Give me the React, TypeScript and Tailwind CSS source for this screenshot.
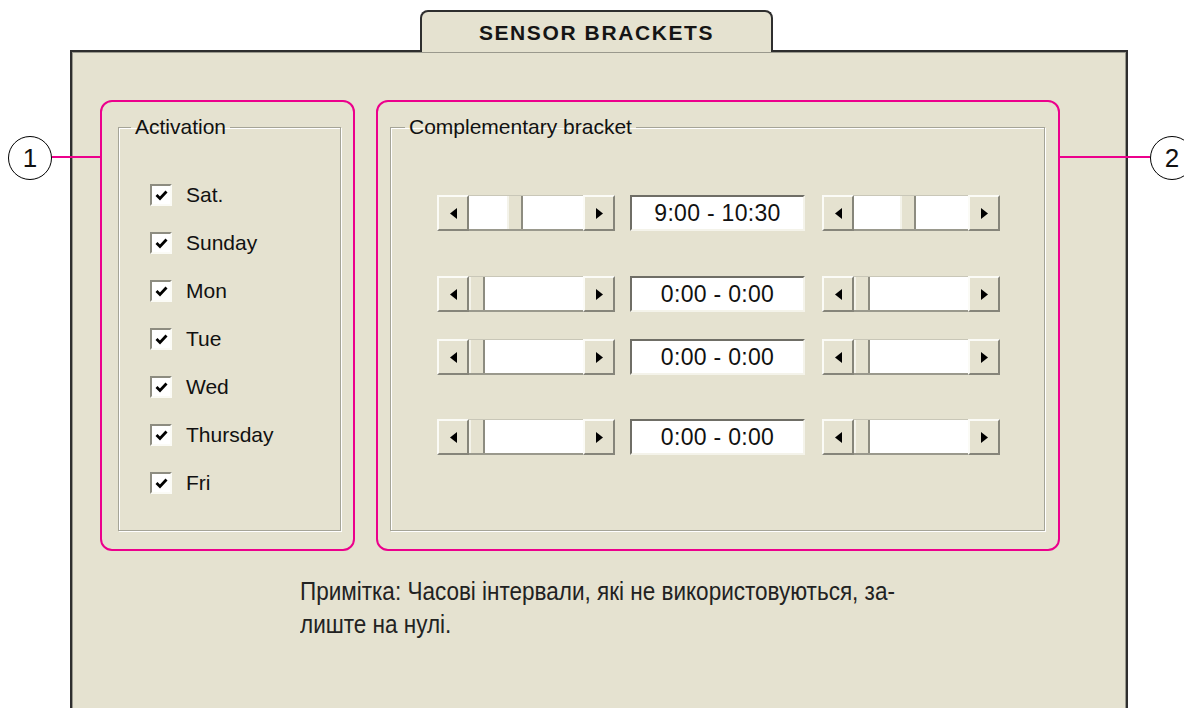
import React from 'react'

const days = ['Sat.', 'Sunday', 'Mon', 'Tue', 'Wed', 'Thursday', 'Fri']

const brackets = [
  { label: '9:00 - 10:30', from: 38, to: 46, gap: 'mt-0' },
  { label: '0:00 - 0:00', from: 0, to: 0, gap: 'mt-[45px]' },
  { label: '0:00 - 0:00', from: 0, to: 0, gap: 'mt-[27px]' },
  { label: '0:00 - 0:00', from: 0, to: 0, gap: 'mt-[44px]' },
]

function CheckBox() {
  return (
    <span className="flex h-[22px] w-[22px] items-center justify-center border-2 border-t-[#8d8c80] border-l-[#8d8c80] border-r-[#fbfbf6] border-b-[#fbfbf6] bg-white">
      <svg width="13" height="12" viewBox="0 0 13 12">
        <path d="M1.5 6 L5 9.5 L11.5 2.5" fill="none" stroke="#000" strokeWidth="2.8" />
      </svg>
    </span>
  )
}

function ArrowButton({ dir }: { dir: 'left' | 'right' }) {
  return (
    <div className="flex h-full w-[32px] items-center justify-center border-2 border-t-[#fbfbf6] border-l-[#fbfbf6] border-r-[#86857a] border-b-[#86857a] bg-[#e5e2d0]">
      <svg width="7" height="11" viewBox="0 0 7 11">
        {dir === 'left' ? <polygon points="7,0 7,11 0,5.5" fill="#000" /> : <polygon points="0,0 0,11 7,5.5" fill="#000" />}
      </svg>
    </div>
  )
}

function ScrollBar({ offset }: { offset: number }) {
  return (
    <div className="flex h-[36px] w-[178px]">
      <ArrowButton dir="left" />
      <div className="flex flex-1 border-t border-b-2 border-t-[#c9c7b8] border-b-[#9a998d] bg-white">
        <div style={{ width: offset }} />
        <div className="w-[16px] border-l-2 border-r-2 border-l-[#f4f3ea] border-r-[#8d8c80] bg-[#e5e2d0]" />
      </div>
      <ArrowButton dir="right" />
    </div>
  )
}

function TimeField({ label }: { label: string }) {
  return (
    <div className="flex h-[36px] w-[175px] items-center justify-center border-2 border-t-[#6f6e66] border-l-[#6f6e66] border-r-[#f4f3ea] border-b-[#f4f3ea] bg-white text-[23px] tracking-[0.3px] text-[#111]">
      {label}
    </div>
  )
}

const etched = 'border border-[#a5a497] shadow-[inset_1px_1px_0_#ffffff,1px_1px_0_#ffffff]'

export default function App() {
  return (
    <div className="relative flex h-[708px] w-[1184px] flex-col overflow-hidden bg-white font-['Liberation_Sans',sans-serif] text-[#111]">
      {/* tab */}
      <div className="pl-[420px] pt-[10px]">
        <div className="relative z-10 flex h-[42px] w-[353px] items-start justify-center rounded-t-[8px] border-x-2 border-t-2 border-[#2e2e2e] bg-[#e5e2d0] pt-[9px]">
          <span className="text-[21px] font-bold leading-[24px] tracking-[1.6px] text-[#151515]">SENSOR BRACKETS</span>
        </div>
      </div>

      {/* panel */}
      <div className="-mt-[2px] ml-[70px] flex h-[660px] w-[1058px] flex-col border-x-2 border-t-2 border-[#2e2e2e] bg-[#e5e2d0] pl-[28px] pt-[48px] shadow-[inset_1px_1px_0_#9a998d,inset_-1px_0_0_#9a998d]">
        <div className="flex gap-[21px]">
          {/* activation */}
          <div className="h-[451px] w-[255px] rounded-[12px] border-2 border-[#ec008c]">
            <fieldset className={`ml-[16px] mt-[15px] h-[414px] w-[223px] ${etched}`}>
              <legend className="ml-[12px] px-[4px] text-[21px] leading-[20px]">Activation</legend>
              <div className="flex flex-col pl-[31px] pt-[34px]">
                {days.map(d => (
                  <div key={d} className="flex h-[48px] items-center">
                    <CheckBox />
                    <span className="ml-[14px] text-[21px] leading-[24px]">{d}</span>
                  </div>
                ))}
              </div>
            </fieldset>
          </div>

          {/* complementary */}
          <div className="h-[451px] w-[684px] rounded-[12px] border-2 border-[#ec008c]">
            <fieldset className={`ml-[12px] mt-[15px] h-[414px] w-[655px] ${etched}`}>
              <legend className="ml-[14px] px-[4px] text-[21px] leading-[20px]">Complementary bracket</legend>
              <div className="flex flex-col pl-[46px] pt-[58px]">
                {brackets.map((b, i) => (
                  <div key={i} className={`flex items-center ${b.gap}`}>
                    <ScrollBar offset={b.from} />
                    <div className="ml-[15px]">
                      <TimeField label={b.label} />
                    </div>
                    <div className="ml-[17px]">
                      <ScrollBar offset={b.to} />
                    </div>
                  </div>
                ))}
              </div>
            </fieldset>
          </div>
        </div>

        <p className="ml-[200px] mt-[24px] w-[700px] origin-left scale-x-90 text-[25px] leading-[33px] text-[#222]">
          Примітка: Часові інтервали, які не використовуються, за-
          <br />
          лиште на нулі.
        </p>
      </div>

      {/* callouts */}
      <div className="absolute left-[8px] top-[136px] flex h-[44px] w-[44px] items-center justify-center rounded-full border-[1.5px] border-black bg-white text-[26px] text-[#111]">
        1
      </div>
      <div className="absolute left-[52px] top-[156px] h-[2px] w-[48px] bg-[#ec008c]" />
      <div className="absolute left-[1150px] top-[136px] flex h-[44px] w-[44px] items-center justify-center rounded-full border-[1.5px] border-black bg-white text-[26px] text-[#111]">
        2
      </div>
      <div className="absolute left-[1060px] top-[156px] h-[2px] w-[90px] bg-[#ec008c]" />
    </div>
  )
}
